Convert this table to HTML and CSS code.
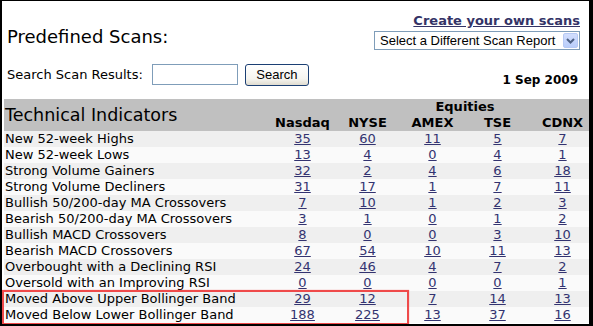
FILE: index.html
```html
<!DOCTYPE html>
<html>
<head>
<meta charset="utf-8">
<link rel="stylesheet" href="styles.css">
</head>
<body>
<div class="frame">
  <div class="top">
    <h1 class="title">Predefined Scans:</h1>
    <div class="tools">
      <a class="create" href="#">Create your own scans</a>
      <div class="select">
        <span class="select-text">Select a Different Scan Report</span>
        <span class="arrow"><svg width="15" height="15" viewBox="0 0 15 15"><polyline points="4,6 7.5,9.5 11,6" fill="none" stroke="#4d6185" stroke-width="2"/></svg></span>
      </div>
    </div>
  </div>
  <div class="search">
    <span class="search-label">Search Scan Results:</span>
    <input class="search-input" type="text">
    <button class="search-btn">Search</button>
    <span class="date">1 Sep 2009</span>
  </div>
  <table class="scans">
    <colgroup><col class="c-label"><col class="c-num"><col class="c-num"><col class="c-num"><col class="c-num"><col class="c-num"></colgroup>
    <thead>
      <tr class="h1row"><th class="ti" rowspan="2">Technical Indicators</th><th></th><th colspan="4" class="eq">Equities</th></tr>
      <tr class="h2row"><th>Nasdaq</th><th>NYSE</th><th>AMEX</th><th>TSE</th><th>CDNX</th></tr>
    </thead>
    <tbody>
      <tr><td>New 52-week Highs</td><td><a href="#">35</a></td><td><a href="#">60</a></td><td><a href="#">11</a></td><td><a href="#">5</a></td><td><a href="#">7</a></td></tr>
      <tr><td>New 52-week Lows</td><td><a href="#">13</a></td><td><a href="#">4</a></td><td><a href="#">0</a></td><td><a href="#">4</a></td><td><a href="#">1</a></td></tr>
      <tr><td>Strong Volume Gainers</td><td><a href="#">32</a></td><td><a href="#">2</a></td><td><a href="#">4</a></td><td><a href="#">6</a></td><td><a href="#">18</a></td></tr>
      <tr><td>Strong Volume Decliners</td><td><a href="#">31</a></td><td><a href="#">17</a></td><td><a href="#">1</a></td><td><a href="#">7</a></td><td><a href="#">11</a></td></tr>
      <tr><td>Bullish 50/200-day MA Crossovers</td><td><a href="#">7</a></td><td><a href="#">10</a></td><td><a href="#">1</a></td><td><a href="#">2</a></td><td><a href="#">3</a></td></tr>
      <tr><td>Bearish 50/200-day MA Crossovers</td><td><a href="#">3</a></td><td><a href="#">1</a></td><td><a href="#">0</a></td><td><a href="#">1</a></td><td><a href="#">2</a></td></tr>
      <tr><td>Bullish MACD Crossovers</td><td><a href="#">8</a></td><td><a href="#">0</a></td><td><a href="#">0</a></td><td><a href="#">3</a></td><td><a href="#">10</a></td></tr>
      <tr><td>Bearish MACD Crossovers</td><td><a href="#">67</a></td><td><a href="#">54</a></td><td><a href="#">10</a></td><td><a href="#">11</a></td><td><a href="#">13</a></td></tr>
      <tr><td>Overbought with a Declining RSI</td><td><a href="#">24</a></td><td><a href="#">46</a></td><td><a href="#">4</a></td><td><a href="#">7</a></td><td><a href="#">2</a></td></tr>
      <tr><td>Oversold with an Improving RSI</td><td><a href="#">0</a></td><td><a href="#">0</a></td><td><a href="#">0</a></td><td><a href="#">0</a></td><td><a href="#">1</a></td></tr>
      <tr><td>Moved Above Upper Bollinger Band</td><td><a href="#">29</a></td><td><a href="#">12</a></td><td><a href="#">7</a></td><td><a href="#">14</a></td><td><a href="#">13</a></td></tr>
      <tr><td>Moved Below Lower Bollinger Band</td><td><a href="#">188</a></td><td><a href="#">225</a></td><td><a href="#">13</a></td><td><a href="#">37</a></td><td><a href="#">16</a></td></tr>
    </tbody>
  </table>
  <div class="highlight"></div>
</div>
</body>
</html>
```
FILE: styles.css
```css
html, body {
  margin: 0;
  padding: 0;
  background: #fff;
}
.frame {
  position: relative;
  width: 593px;
  height: 326px;
  box-sizing: border-box;
  border-style: solid;
  border-color: #000;
  border-width: 1px 4px 2px 2px;
  overflow: hidden;
  font-family: "DejaVu Sans", Verdana, sans-serif;
  color: #000;
}
.top {
  display: flex;
  justify-content: space-between;
  align-items: flex-start;
  padding: 12px 9px 0 5px;
}
.title {
  margin: 13px 0 0 0;
  font-size: 18px;
  font-weight: normal;
  line-height: 21px;
}
.tools {
  display: flex;
  flex-direction: column;
  align-items: flex-end;
}
.create {
  font-size: 13px;
  font-weight: bold;
  line-height: 15px;
  color: #333366;
}
.select {
  margin-top: 3px;
  width: 206px;
  height: 19px;
  box-sizing: border-box;
  border: 1px solid #7f9db9;
  display: flex;
  align-items: center;
  padding-left: 5px;
  font-family: "Liberation Sans", Arial, sans-serif;
  font-size: 13px;
}
.select-text {
  flex: 1;
  line-height: 15px;
}
.arrow {
  width: 15px;
  height: 15px;
  margin-right: 1px;
  box-sizing: border-box;
  border: 1px solid #b6c9f4;
  border-radius: 2px;
  background: linear-gradient(#d2defd, #b9cdfa);
  display: flex;
}
.arrow svg {
  margin: -1px;
}
.search {
  display: flex;
  align-items: center;
  margin-top: 14px;
  padding: 0 11px 0 5px;
  height: 21px;
  font-size: 13px;
}
.search-label {
  line-height: 15px;
}
.search-input {
  width: 86px;
  height: 21px;
  box-sizing: border-box;
  border: 1px solid #7f9db9;
  margin: 0 7px 0 9px;
  padding: 0;
}
.search-btn {
  width: 64px;
  height: 22px;
  box-sizing: border-box;
  border: 1px solid #1b3f73;
  border-radius: 3px;
  background: linear-gradient(#ffffff, #f5f4ef 70%, #e0dcd0);
  font-family: "Liberation Sans", Arial, sans-serif;
  font-size: 13px;
  color: #000;
  padding: 0;
}
.date {
  margin-left: auto;
  align-self: flex-start;
  padding-top: 9px;
  font-size: 12px;
  font-weight: bold;
  line-height: 14px;
}
.scans {
  margin: 14px 0 0 2px;
  width: 591px;
  table-layout: fixed;
  border-collapse: collapse;
  border-spacing: 0;
  font-size: 13px;
}
.c-label { width: 266px; }
.c-num { width: 65px; }
.scans th, .scans td {
  padding: 0 1px;
  line-height: 16px;
  height: 16px;
  white-space: nowrap;
}
.scans thead tr {
  background: #c0c0c0;
}
.scans th {
  font-weight: bold;
  text-align: center;
}
.scans th.ti {
  text-align: left;
  font-weight: normal;
  font-size: 17.5px;
  vertical-align: middle;
}
.scans td {
  text-align: center;
}
.scans td:first-child {
  text-align: left;
}
.scans tbody tr:nth-child(odd) {
  background: #efefef;
}
.scans tbody tr:nth-child(even) {
  background: #fafafa;
}
.scans a {
  color: #333370;
}
.highlight {
  position: absolute;
  left: 0;
  top: 289px;
  width: 407px;
  height: 35px;
  box-sizing: border-box;
  border: 2px solid #ef4a4a;
  box-shadow: 0 0 1px rgba(239, 74, 74, 0.6);
}
```
